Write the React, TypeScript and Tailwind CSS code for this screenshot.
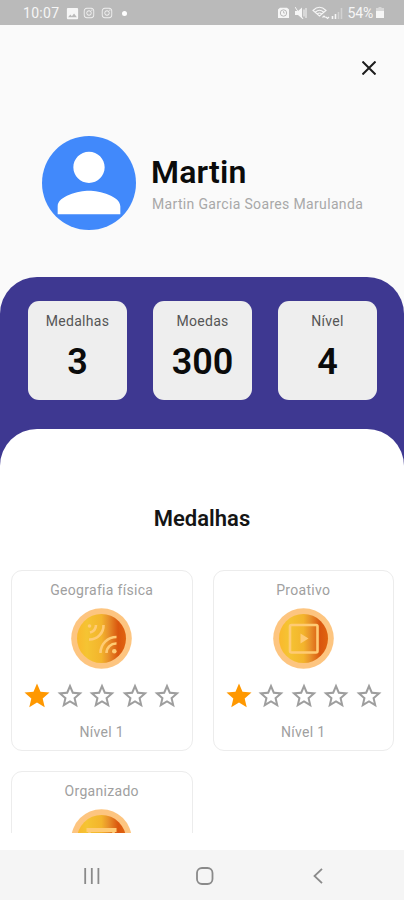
import type { ReactNode } from "react";
import { FaInstagram } from "react-icons/fa";
import { MdImage, MdPerson, MdStar, MdStarBorder } from "react-icons/md";

function StatusBar() {
  return (
    <div className="flex h-[25px] shrink-0 items-center justify-between bg-[#bababa] pt-px pr-[20px] pl-[23px] text-[14px] leading-none text-[#f6f6f6]">
      <div className="flex items-center">
        <span className="w-[42px] tracking-[0.3px]">10:07</span>
        <MdImage className="size-[15px]" />
        <FaInstagram className="ml-[3px] size-[12px] opacity-90" />
        <FaInstagram className="ml-[6px] size-[12px] opacity-90" />
        <span className="ml-[9px] size-[5px] rounded-full bg-white" />
      </div>
      <div className="flex items-center">
        <svg className="h-[12px] w-[11px]" viewBox="0 0 11 12">
          <path d="M0 2.500 2 .8h7l2 1.700V11H0z" fill="currentColor" />
          <circle cx="5.500" cy="6" r="3.200" fill="none" stroke="#bababa" />
          <path d="M5.500 4v2h1.600" fill="none" stroke="#bababa" strokeWidth=".8" />
        </svg>
        <svg className="ml-[6px] h-[12px] w-[12px]" viewBox="0 0 12 12">
          <path d="M0 4h3l4-3.500v11L3 8H0z" fill="currentColor" />
          <path d="m0 0 8 12M9 2.500v7M11 1v10" fill="none" stroke="currentColor" strokeWidth="1" />
        </svg>
        <svg className="ml-[5px] h-[14px] w-[18px]" viewBox="0 0 18 14">
          <path d="M1 4.500q6.500-6.500 13 0L7.500 10zM3.500 6q4-3.500 8 0M5.500 7.700q2-1.500 4 0" fill="none" stroke="currentColor" strokeWidth="1.100" />
          <path d="m10.500 11.500 1.500-1.500 1.500 1.500M14 11l1.500 1.500L17 11" fill="none" stroke="currentColor" strokeWidth="1.200" />
        </svg>
        <svg className="ml-px h-[12px] w-[12px]" viewBox="0 0 12 12">
          <path d="M1.500 9v3M4.500 7v5" stroke="currentColor" strokeWidth="1.600" />
          <path d="M7.500 5v7M10.500 1v11" stroke="currentColor" strokeWidth="1.600" opacity=".4" />
        </svg>
        <span className="ml-[5px] tracking-[-0.2px]">54%</span>
        <svg className="ml-[3px] h-[12px] w-[8px]" viewBox="0 0 8 12">
          <path d="M2.500 0h3v1H8v3H0V1h2.500z" fill="currentColor" opacity=".5" />
          <path d="M0 4h8v7H0z" fill="currentColor" />
        </svg>
      </div>
    </div>
  );
}

function StatBox({ label, value }: { label: string; value: string }) {
  return (
    <div className="flex h-[99px] w-[99px] flex-col items-center rounded-[11px] bg-[#eeeeee] pt-[12px]">
      <span className="text-[14px] leading-[16px] tracking-[0.3px] text-[#555555]">{label}</span>
      <span className="mt-[13px] text-[36px] leading-[40px] font-semibold text-[#0b0b0b]">{value}</span>
    </div>
  );
}

function Coin({ id, children }: { id: string; children: ReactNode }) {
  return (
    <svg className="size-[61px]" viewBox="-30.5 -30.5 61 61">
      <defs>
        <linearGradient id={id} x1="0" x2="1" y1="0" y2="0">
          <stop offset="0" stopColor="#fab82c" />
          <stop offset=".2" stopColor="#f5c433" />
          <stop offset=".5" stopColor="#f3b42c" />
          <stop offset=".64" stopColor="#e8912a" />
          <stop offset=".84" stopColor="#da560e" />
          <stop offset="1" stopColor="#e0640f" />
        </linearGradient>
      </defs>
      <circle r="30.3" fill="#fdc580" />
      <circle r="24.500" fill={`url(#${id})`} />
      <g fill="none" stroke="#ffcb74" strokeWidth="2.600">
        {children}
      </g>
    </svg>
  );
}

type MedalCardProps = { title: string; level?: number; children: ReactNode };

function MedalCard({ title, level, children }: MedalCardProps) {
  return (
    <div className="flex h-[181px] flex-col items-center rounded-[11px] border-[1.500px] border-[#ececec] bg-white pt-[10px]">
      <span className="text-[14px] leading-[18px] tracking-[0.3px] text-[#a0a0a0]">{title}</span>
      <div className="mt-[9px]">{children}</div>
      {level !== undefined && (
        <>
          <div className="mt-[12px] ml-px flex gap-[2.400px]">
            {[1, 2, 3, 4, 5].map((n) =>
              n <= level ? (
                <MdStar key={n} className="size-[30px] text-[#ff9800]" />
              ) : (
                <MdStarBorder key={n} className="size-[30px] text-[#9e9e9e]" />
              ),
            )}
          </div>
          <span className="mt-[12px] text-[14px] leading-[18px] tracking-[0.3px] text-[#a0a0a0]">Nível {level}</span>
        </>
      )}
    </div>
  );
}

export default function App() {
  return (
    <div className="flex h-[900px] w-[404px] flex-col overflow-hidden bg-[#fafafa] font-[Roboto,sans-serif]">
      <StatusBar />
      <header className="h-[252px] shrink-0">
        <div className="flex justify-end pt-[36px] pr-[28px]">
          <svg className="size-[14px]" viewBox="0 0 14 14">
            <path d="m.5.500 13 13M13.500.500.500 13.500" stroke="#1c1c1c" strokeWidth="2" />
          </svg>
        </div>
        <div className="mt-[61px] flex items-center pl-[42px]">
          <div className="size-[94px] shrink-0 overflow-hidden rounded-full bg-[#4189fb]">
            <MdPerson className="size-[94px] text-white" />
          </div>
          <div className="ml-[16px] flex flex-col">
            <span className="-ml-px text-[32px] leading-[38px] font-semibold tracking-[0.2px] text-[#0b0b0b]">Martin</span>
            <span className="mt-[4px] text-[14px] leading-[18px] tracking-[0.34px] whitespace-nowrap text-[#a8a8a8]">
              Martin Garcia Soares Marulanda
            </span>
          </div>
        </div>
      </header>
      <section className="h-[190px] shrink-0 rounded-t-[37px] bg-[#3e3891] pt-[24px]">
        <div className="flex justify-between pr-[27px] pl-[28px]">
          <StatBox label="Medalhas" value="3" />
          <StatBox label="Moedas" value="300" />
          <StatBox label="Nível" value="4" />
        </div>
      </section>
      <main className="-mt-[38px] h-[404px] shrink-0 overflow-hidden rounded-t-[37px] bg-white">
        <h1 className="pt-[76px] text-center text-[22px] leading-[28px] font-semibold text-[#151515]">Medalhas</h1>
        <div className="mt-[37px] grid grid-cols-2 gap-[20px] pr-[10px] pl-[11px]">
          <MedalCard title="Geografia física" level={1}>
            <Coin id="coin-geo">
              <path d="M-12.500 1A14 14 0 0 0 2-13.500M-11.500-6A8 8 0 0 0-5.500-13.500M-1 14.500A16 16 0 0 1 15-1.500M5 14.500A9.500 9.500 0 0 1 15 5" />
              <circle cx="-12" cy="-12.500" r="1.800" fill="#ffcb74" stroke="none" />
              <circle cx="12.800" cy="12.700" r="2.300" fill="#ffcb74" stroke="none" />
            </Coin>
          </MedalCard>
          <MedalCard title="Proativo" level={1}>
            <Coin id="coin-play">
              <rect x="-13.500" y="-13.500" width="27.500" height="27.500" rx="1.500" />
              <path d="M-3-5 5 0-3 5z" fill="#ffcb74" stroke="none" />
            </Coin>
          </MedalCard>
          <MedalCard title="Organizado">
            <Coin id="coin-org">
              <path d="M-15-11.500h30v4h-30z" fill="#ffcb74" stroke="none" />
              <path d="M-12-7.500v20h24v-20" />
            </Coin>
          </MedalCard>
        </div>
      </main>
      <div className="h-[17px] shrink-0 bg-white" />
      <nav className="flex h-[50px] shrink-0 items-center bg-[#f5f5f5] pt-[2px] pl-[84px]">
        <svg className="h-[16px] w-[16px]" viewBox="0 0 16 16">
          <path d="M1.200 0v16M7.800 0v16M14.400 0v16" stroke="#8a8a8a" strokeWidth="1.800" />
        </svg>
        <svg className="ml-[96px] size-[18px]" viewBox="0 0 18 18">
          <rect x="1" y="1" width="15.500" height="16" rx="5" fill="none" stroke="#8a8a8a" strokeWidth="1.800" />
        </svg>
        <svg className="ml-[99px] h-[16px] w-[10px]" viewBox="0 0 10 16">
          <path d="M9 .8 1.500 8 9 15.200" fill="none" stroke="#8a8a8a" strokeWidth="1.800" />
        </svg>
      </nav>
    </div>
  );
}
